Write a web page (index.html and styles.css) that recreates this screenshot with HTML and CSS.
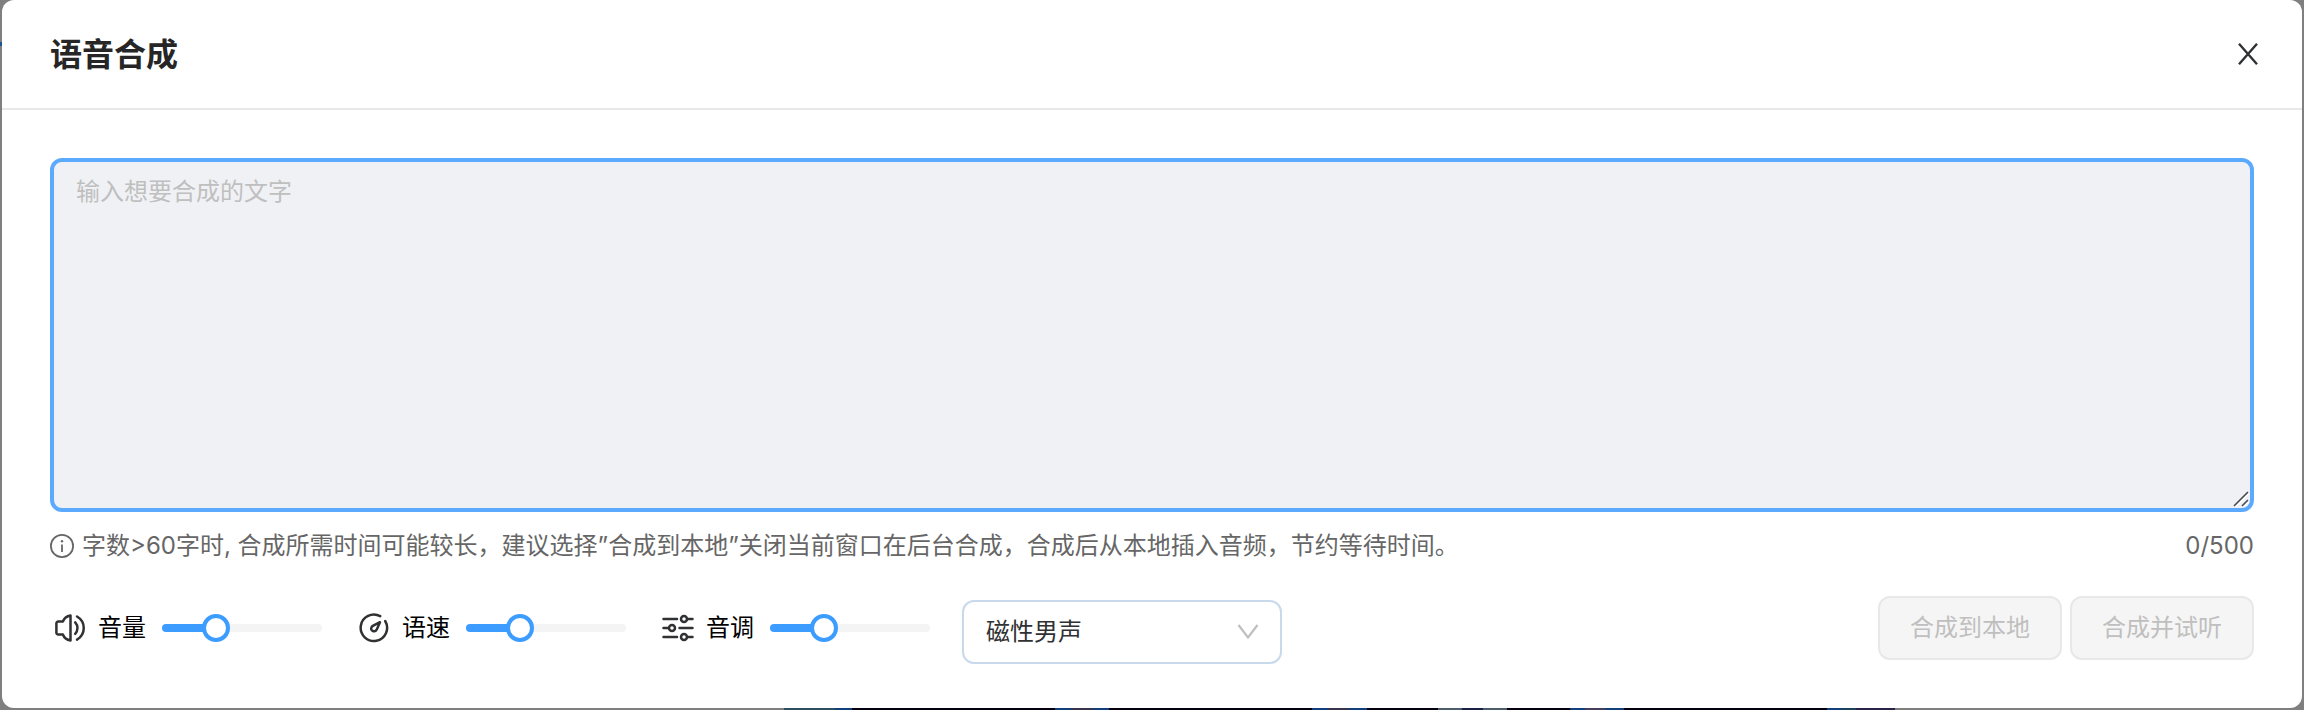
FILE: index.html
```html
<!DOCTYPE html>
<html lang="zh-CN">
<head>
<meta charset="utf-8">
<meta name="viewport" content="width=device-width, initial-scale=1">
<title>语音合成</title>
<link rel="stylesheet" href="styles.css">
</head>
<body>
<main class="dialog" role="dialog" aria-labelledby="dialog-title">
  <header class="dialog-header">
    <h1 class="dialog-title" id="dialog-title">语音合成</h1>
    <button class="close" type="button" aria-label="关闭">
      <svg width="20" height="22" viewBox="0 0 20 22" fill="none" stroke="currentColor" stroke-width="2.4"><path d="M1 .8 19 21.2M19 .8 1 21.2"/></svg>
    </button>
  </header>
  <form class="dialog-body">
    <div class="editor">
      <textarea class="editor-input" rows="9" maxlength="500" placeholder="输入想要合成的文字" aria-label="合成文字"></textarea>
      <svg class="grip" width="16" height="16" viewBox="0 0 16 16" fill="none"><path d="M2 16 16 2M10 16l6-6" stroke="#fff" stroke-width="2"/><path d="M1 15 15 1M9 15l6-6" stroke="#4a4a4c" stroke-width="1.6"/></svg>
    </div>
    <div class="hint">
      <svg width="24" height="24" viewBox="0 0 24 24" fill="none" stroke="currentColor"><circle cx="12" cy="12" r="11.1" stroke-width="1.8"/><path d="M12 10.500v7.500" stroke-width="1.8"/><circle cx="12" cy="7.300" r="1.200" fill="currentColor" stroke="none"/></svg>
      <p class="hint-text">字数&gt;60字时, 合成所需时间可能较长，建议选择”合成到本地”关闭当前窗口在后台合成，合成后从本地插入音频，节约等待时间。</p>
      <span class="count">0/500</span>
    </div>
    <div class="toolbar">
      <div class="settings">
        <label class="setting">
          <svg width="32" height="32" viewBox="0 0 32 32" fill="none" stroke="#303133" stroke-width="2.500" stroke-linecap="round" stroke-linejoin="round"><path d="M16.500 3.500v25c-3.500-.6-6.500-3-7.600-6H4.200a1.800 1.800 0 0 1-1.800-1.800v-9.400a1.800 1.800 0 0 1 1.800-1.800h4.700c1.100-3 4.100-5.400 7.600-6z"/><path d="M21.200 10.300c3 3.200 3 8.400 0 11.600M23 4.500c9 5.200 9 18 0 23.200"/></svg>
          <span>音量</span>
          <input class="slider" type="range" value="30" style="--fill: 34%">
        </label>
        <label class="setting">
          <svg width="32" height="32" viewBox="0 0 32 32" fill="none" stroke="#303133" stroke-width="2.500" stroke-linecap="round" stroke-linejoin="round"><path d="M22.200 4.200A13.200 13.200 0 1 0 27.200 9"/><path d="M22 10.200 18.900 17.200C18.200 18.700 16.600 19.500 15.300 19.200C13.500 18.700 12.700 17 13.400 15.500C13.700 14.800 14.200 14.300 14.800 13.900Z"/></svg>
          <span>语速</span>
          <input class="slider" type="range" value="30" style="--fill: 34%">
        </label>
        <label class="setting">
          <svg width="32" height="32" viewBox="0 0 32 32" fill="none" stroke="#303133" stroke-width="2.500" stroke-linecap="round"><path d="M1.500 7H15M25.500 7h5M1.500 16H6M17.500 16h13M1.500 25H15M25.500 25h5"/><circle cx="22" cy="7" r="3"/><circle cx="10" cy="16" r="3"/><circle cx="22" cy="25" r="3"/></svg>
          <span>音调</span>
          <input class="slider" type="range" value="30" style="--fill: 34%">
        </label>
        <div class="voice">
          <select class="voice-select" aria-label="音色"><option>磁性男声</option></select>
          <svg class="voice-arrow" width="22" height="16" viewBox="0 0 22 16" fill="none" stroke="#bfbfbf" stroke-width="2.200"><path d="M1.500 1 11 13.500 20.500 1"/></svg>
        </div>
      </div>
      <div class="actions">
        <button class="action" type="button" disabled>合成到本地</button>
        <button class="action" type="button" disabled>合成并试听</button>
      </div>
    </div>
  </form>
</main>
</body>
</html>
```

FILE: styles.css
```css
* {
  box-sizing: border-box;
}

body {
  margin: 0;
  padding: 0 2px 2px;
  min-height: 100vh;
  background:
    linear-gradient(#1f5590, #1f5590) 0 42px / 2px 4px no-repeat,
    linear-gradient(90deg, #2c4f60 0 51px, #12407c 51px 68px, #04000f 68px 271px, #12407c 271px 287px, #38344c 287px 309px, #12407c 309px 325px, #04000f 325px 528px, #12407c 528px 544px, #38344c 544px 565px, #12407c 565px 583px, #04000f 583px 654px, #4c5e6c 654px 678px, #1c2045 678px 699px, #4c5e6c 699px 723px, #04000f 723px 786px, #12407c 786px 801px, #453f5c 801px 821px, #12407c 821px 840px, #04000f 840px 1043px, #12407c 1043px 1058px, #1f4258 1058px 1072px, #29234a 1072px) 784px 100% / 1111px 2px no-repeat,
    #7f7f7f;
  color: #000;
  font: 24px/36px Inter, "Noto Sans CJK SC", sans-serif;
}

button,
input,
select,
textarea {
  font: inherit;
}

.dialog {
  background: #fff;
  border-radius: 12px;
}

.dialog-header {
  display: flex;
  align-items: center;
  justify-content: space-between;
  padding: 32px 40px 32px 48px;
  border-bottom: 2px solid #e8e8e8;
}

.dialog-title {
  margin: 0;
  padding-top: 2px;
  color: #262626;
  font-size: 32px;
  font-weight: 600;
  line-height: 42px;
}

.close {
  display: flex;
  padding: 4px;
  border: 0;
  background: none;
  color: #303133;
}

.dialog-body {
  padding: 48px 48px 44px;
}

.editor {
  position: relative;
}

.editor-input {
  display: block;
  width: 100%;
  padding: 12px 22px 10px;
  border: 4px solid #5caaff;
  border-radius: 12px;
  outline: 0;
  background: #f0f1f5;
  color: #262626;
  line-height: 36px;
  resize: none;
}

.editor-input::placeholder {
  color: #bfbfbf;
}

.grip {
  position: absolute;
  right: 5px;
  bottom: 5px;
  pointer-events: none;
}

.hint {
  display: flex;
  align-items: center;
  gap: 8px;
  padding-top: 16px;
  color: #666;
}

.hint-text {
  flex: 1;
  margin: 0;
}

.toolbar {
  display: flex;
  align-items: flex-start;
  justify-content: space-between;
  padding-top: 32px;
}

.settings,
.actions {
  display: flex;
}

.settings {
  gap: 32px;
}

.setting {
  display: flex;
  align-items: center;
  height: 64px;
  padding-left: 4px;
}

.setting span {
  margin: 0 16px 0 12px;
}

.slider {
  appearance: none;
  width: 160px;
  height: 28px;
  margin: 0;
  background: none;
}

.slider::-webkit-slider-runnable-track {
  height: 8px;
  border-radius: 4px;
  background: linear-gradient(90deg, #3c9cff var(--fill), #f4f4f4 var(--fill));
}

.slider::-webkit-slider-thumb {
  appearance: none;
  width: 28px;
  height: 28px;
  margin-top: -10px;
  border: 4px solid #3c9cff;
  border-radius: 50%;
  background: #fff;
}

.voice {
  position: relative;
  padding-top: 4px;
}

.voice-select {
  appearance: none;
  width: 320px;
  height: 64px;
  padding: 0 22px;
  border: 2px solid #c8d9ec;
  border-radius: 12px;
  background: #fff;
  color: #303133;
}

.voice-arrow {
  position: absolute;
  right: 23px;
  top: 28px;
  pointer-events: none;
}

.actions {
  gap: 8px;
}

.action {
  height: 64px;
  padding: 0 30px;
  border: 2px solid #e8e8e8;
  border-radius: 12px;
  background: #f5f5f5;
  color: #bfbfbf;
}
```
